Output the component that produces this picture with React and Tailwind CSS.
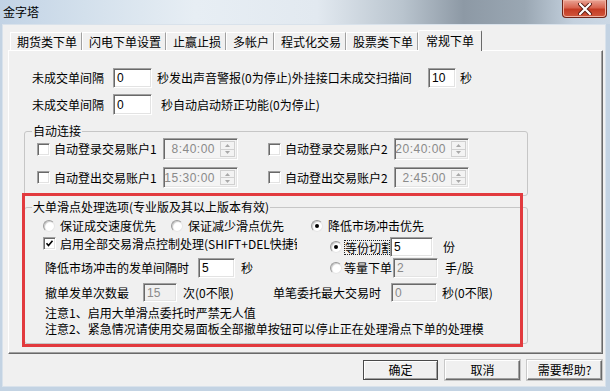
import React from 'react';

const tabs = ['期货类下单', '闪电下单设置', '止赢止损', '多帐户', '程式化交易', '股票类下单'];

function Field({ value, disabled, className = '' }) {
  return (
    <div
      className={`h-full flex items-center pl-[3px] border border-t-[#a0a0a0] border-l-[#a0a0a0] border-r-white border-b-white shadow-[inset_1px_1px_0_#696969,inset_-1px_-1px_0_#e3e3e3] ${
        disabled ? 'bg-[#f0f0f0] text-[#8a8a8a]' : 'bg-white text-black'
      } ${className}`}
    >
      <span className="font-['Liberation_Sans',sans-serif] text-[12px]">{value}</span>
    </div>
  );
}

function Check({ checked }) {
  return (
    <div className="w-[13px] h-[13px] shrink-0 bg-white border border-t-[#a0a0a0] border-l-[#a0a0a0] border-r-white border-b-white shadow-[inset_1px_1px_0_#696969,inset_-1px_-1px_0_#e3e3e3] flex items-center justify-center">
      {checked && (
        <svg width="9" height="9" viewBox="0 0 9 9">
          <polyline points="1.5,4.2 3.5,6.5 7.5,1.8" fill="none" stroke="#000" strokeWidth="1.6" />
        </svg>
      )}
    </div>
  );
}

function Radio({ checked }) {
  return (
    <div className="w-[12px] h-[12px] shrink-0 rounded-full bg-white border border-t-[#9a9a9a] border-l-[#9a9a9a] border-r-[#e6e6e6] border-b-[#e6e6e6] shadow-[inset_1px_1px_1px_#c8c8c8] flex items-center justify-center">
      {checked && <div className="w-[4px] h-[4px] rounded-full bg-black" />}
    </div>
  );
}

function Caret({ up }) {
  return (
    <svg width="5" height="3" viewBox="0 0 5 3">
      <polygon points={up ? '0,3 5,3 2.5,0' : '0,0 5,0 2.5,3'} fill="#a8a8a8" />
    </svg>
  );
}

function TimeBox({ value }) {
  return (
    <div className="w-[75px] h-full flex items-stretch bg-[#f4f4f4] border border-t-[#a0a0a0] border-l-[#a0a0a0] border-r-white border-b-white shadow-[inset_1px_1px_0_#696969,inset_-1px_-1px_0_#e3e3e3]">
      <div className="flex-1 flex items-center justify-end pr-[5px] text-[#8a8a8a] font-['Liberation_Sans',sans-serif] tracking-[0.5px]">
        {value}
      </div>
      <div className="w-[15px] my-[2px] mr-[2px] flex flex-col">
        <div className="flex-1 flex items-center justify-center border border-[#d0d0d0] bg-[#f3f3f3]">
          <Caret up />
        </div>
        <div className="flex-1 flex items-center justify-center border border-t-0 border-[#d0d0d0] bg-[#f3f3f3]">
          <Caret />
        </div>
      </div>
    </div>
  );
}

function Btn({ children, def }) {
  return (
    <div
      className={`w-[75px] h-[20px] flex items-center justify-center bg-[#f0f0f0] border ${
        def
          ? 'border-[#4a4a4a] shadow-[inset_1px_1px_0_#fff,inset_-1px_-1px_0_#a0a0a0]'
          : 'border-t-[#fff] border-l-[#fff] border-r-[#696969] border-b-[#696969] shadow-[inset_-1px_-1px_0_#a0a0a0,0_0_0_1px_#c8c8c8]'
      }`}
    >
      {children}
    </div>
  );
}

export default function App() {
  return (
    <div className="relative w-[610px] h-[391px] overflow-hidden bg-[#c3d3e3] text-[12px] leading-[14px] text-black font-['Noto_Sans_CJK_SC',sans-serif]">
      {/* title bar */}
      <div className="h-[24px] flex items-start justify-between bg-[linear-gradient(90deg,#c2d3e5_0%,#d3e0ec_14%,#e7eef4_32%,#e2e9f0_52%,#b9c4ce_66%,#8d99a5_76%,#9aa7b3_86%,#c4d1de_94%,#cbd8e5_100%)]">
        <span className="pl-[3px] pt-[5px]">金字塔</span>
        <div className="mr-[3px] w-[45px] h-[18px] rounded-b-[4px] border border-t-0 border-[#6e2418] bg-[linear-gradient(180deg,#e9a394_0%,#d8644f_45%,#c43b24_55%,#d0573c_100%)] shadow-[inset_0_0_0_1px_#f0b0a0] flex items-center justify-center">
          <svg width="14" height="12" viewBox="0 0 14 12">
            <path d="M2 1 L12 11 M12 1 L2 11" stroke="#5a1d14" strokeWidth="4" strokeLinecap="round" />
            <path d="M2 1 L12 11 M12 1 L2 11" stroke="#fff" strokeWidth="2.2" strokeLinecap="round" />
          </svg>
        </div>
      </div>

      {/* client area */}
      <div className="ml-[2px] w-[604px] h-[363px] bg-[#f0f0f0] border border-[#d9e2eb] flex flex-col">
        {/* tab headers */}
        <div className="mt-[5px] h-[20px] pl-[7px] flex items-end">
          {tabs.map((t) => (
            <div
              key={t}
              className="h-[18px] pl-[6px] pr-[4px] border-l border-t border-l-white border-t-white border-r border-r-[#a0a0a0] flex items-center whitespace-nowrap"
            >
              {t}
            </div>
          ))}
          <div className="relative z-10 h-[21px] -mb-[1px] px-[7px] border border-b-0 border-t-white border-l-white border-r-[#696969] bg-[#f0f0f0] rounded-t-[2px] flex items-center whitespace-nowrap">
            常规下单
          </div>
        </div>

        {/* tab panel */}
        <div className="ml-[5px] w-[595px] h-[304px] border border-t-white border-l-white border-r-[#696969] border-b-[#696969] shadow-[inset_-1px_-1px_0_#a0a0a0] flex flex-col">
          <div className="mt-[17px] h-[20px] pl-[23px] flex items-center">
            <span className="w-[81px]">未成交单间隔</span>
            <Field value="0" className="w-[39px]" />
            <span className="ml-[5px] w-[271px] whitespace-nowrap">秒发出声音警报(0为停止)外挂接口未成交扫描间</span>
            <Field value="10" className="w-[28px]" />
            <span className="ml-[4px]">秒</span>
          </div>
          <div className="mt-[6px] h-[21px] pl-[23px] flex items-center">
            <span className="w-[81px]">未成交单间隔</span>
            <Field value="0" className="w-[39px]" />
            <span className="ml-[9px] whitespace-nowrap">秒自动启动矫正功能(0为停止)</span>
          </div>

          {/* 自动连接 */}
          <fieldset className="mt-[9px] ml-[15px] w-[504px] border border-[#c6c6c6] rounded-[3px]">
            <legend className="ml-[7px] px-[1px] leading-[14px]">自动连接</legend>
            <div className="pl-[12px] pb-[7px]">
              <div className="h-[22px] flex items-center">
                <Check />
                <span className="ml-[4px] w-[109px] whitespace-nowrap">自动登录交易账户1</span>
                <TimeBox value="8:40:00" />
                <div className="ml-[30px]">
                  <Check />
                </div>
                <span className="ml-[4px] w-[109px] whitespace-nowrap">自动登录交易账户2</span>
                <TimeBox value="20:40:00" />
              </div>
              <div className="mt-[7px] h-[21px] flex items-center">
                <Check />
                <span className="ml-[4px] w-[109px] whitespace-nowrap">自动登出交易账户1</span>
                <TimeBox value="15:30:00" />
                <div className="ml-[30px]">
                  <Check />
                </div>
                <span className="ml-[4px] w-[109px] whitespace-nowrap">自动登出交易账户2</span>
                <TimeBox value="2:45:00" />
              </div>
            </div>
          </fieldset>

          {/* 大单滑点处理选项 */}
          <fieldset className="mt-[4px] ml-[15px] w-[504px] border border-[#c6c6c6] rounded-[3px]">
            <legend className="ml-[7px] px-[1px] leading-[14px]">大单滑点处理选项(专业版及其以上版本有效)</legend>
            <div className="pl-[18px] pb-[7px]">
              <div className="mt-[5px] h-[14px] flex items-center">
                <div className="w-[128px] flex items-center">
                  <Radio />
                  <span className="ml-[5px]">保证成交速度优先</span>
                </div>
                <div className="w-[140px] flex items-center">
                  <Radio />
                  <span className="ml-[5px]">保证减少滑点优先</span>
                </div>
                <div className="flex items-center">
                  <Radio checked />
                  <span className="ml-[5px]">降低市场冲击优先</span>
                </div>
              </div>

              <div className="mt-[4px] h-[41px] flex">
                <div className="w-[287px] flex flex-col">
                  <div className="h-[13px] flex items-center">
                    <Check checked />
                    <span className="ml-[4px] w-[237px] overflow-hidden whitespace-nowrap">启用全部交易滑点控制处理(SHIFT+DEL快捷键)</span>
                  </div>
                  <div className="mt-[8px] h-[20px] pl-[2px] flex items-center">
                    <span className="w-[153px] whitespace-nowrap">降低市场冲击的发单间隔时</span>
                    <Field value="5" className="w-[37px]" />
                    <span className="ml-[6px]">秒</span>
                  </div>
                </div>
                <div className="flex flex-col">
                  <div className="h-[20px] flex items-center">
                    <Radio checked />
                    <span className="ml-[2px] w-[46px] h-[15px] overflow-hidden whitespace-nowrap border border-dotted border-[#222] leading-[13px]">等份切割</span>
                    <Field value="5" className="w-[43px]" />
                    <span className="ml-[10px]">份</span>
                  </div>
                  <div className="mt-[1px] h-[20px] flex items-center">
                    <Radio />
                    <span className="ml-[2px] w-[49px] whitespace-nowrap">等量下单</span>
                    <Field value="2" disabled className="w-[45px]" />
                    <span className="ml-[7px]">手/股</span>
                  </div>
                </div>
              </div>

              <div className="mt-[5px] h-[19px] pl-[2px] flex items-center">
                <span className="w-[98px]">撤单发单次数最</span>
                <Field value="15" disabled className="w-[34px]" />
                <span className="ml-[6px] w-[90px]">次(0不限)</span>
                <span className="w-[118px] whitespace-nowrap">单笔委托最大交易时</span>
                <Field value="0" disabled className="w-[46px]" />
                <span className="ml-[5px]">秒(0不限)</span>
              </div>
              <div className="mt-[3px] h-[15px] pl-[2px] flex items-center whitespace-nowrap">
                注意1、启用大单滑点委托时严禁无人值
              </div>
              <div className="mt-[1px] h-[15px] pl-[2px] flex items-center whitespace-nowrap">
                注意2、紧急情况请使用交易面板全部撤单按钮可以停止正在处理滑点下单的处理模
              </div>
            </div>
          </fieldset>
        </div>

        {/* buttons */}
        <div className="mt-[6px] h-[20px] pr-[3px] flex justify-end gap-[7px]">
          <Btn def>确定</Btn>
          <Btn>取消</Btn>
          <Btn>需要帮助?</Btn>
        </div>
      </div>

      {/* red annotation box */}
      <div className="absolute left-[22px] top-[193px] w-[501px] h-[154px] border-[3px] border-[#e23a3e] pointer-events-none" />
    </div>
  );
}
